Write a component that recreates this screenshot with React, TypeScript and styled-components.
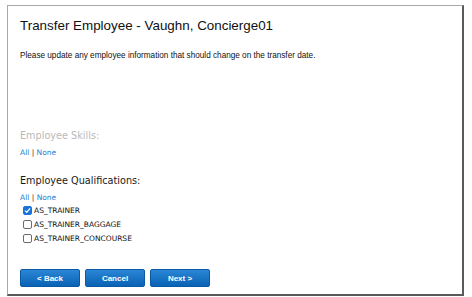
import React, { useState } from "react";
import styled, { createGlobalStyle } from "styled-components";

const GlobalStyle = createGlobalStyle`
  html, body {
    margin: 0;
    padding: 0;
    background: #ffffff;
  }
`;

const Page = styled.div`
  width: 472px;
  height: 297px;
  padding: 5px 8px 1px 7px;
  box-sizing: border-box;
`;

const Panel = styled.div`
  height: 100%;
  box-sizing: border-box;
  border: 1px solid #a8a8a8;
  border-right: 2px solid #5a5a5a;
  border-bottom: 2px solid #5a5a5a;
  padding: 11px 12px 0 12px;
  display: flex;
  flex-direction: column;
  font-family: Verdana, "DejaVu Sans", sans-serif;
`;

const Title = styled.h1`
  margin: 0;
  font-family: "Liberation Sans", Arial, sans-serif;
  font-weight: normal;
  font-size: 13.4px;
  line-height: 18px;
  color: #111;
`;

const Intro = styled.p`
  margin: 15px 0 0 0;
  font-family: "Liberation Sans", Arial, sans-serif;
  font-size: 8.2px;
  line-height: 12px;
  color: #111;
`;

const SectionTitle = styled.div<{ $muted?: boolean }>`
  font-family: "DejaVu Sans", Verdana, sans-serif;
  font-size: 9.7px;
  line-height: 14px;
  color: ${(p) => (p.$muted ? "#b9b9b9" : "#1a1a1a")};
  margin-top: ${(p) => (p.$muted ? "67px" : "16px")};
`;

const Links = styled.div`
  font-family: "DejaVu Sans", Verdana, sans-serif;
  font-size: 7.5px;
  line-height: 10px;
  color: #333;
  margin-top: 5px;
`;

const LinkText = styled.a`
  color: #1a7fd0;
  text-decoration: none;
  cursor: pointer;
`;

const CheckList = styled.div`
  display: flex;
  flex-direction: column;
  gap: 3px;
  margin-top: 2px;
  padding-left: 3px;
`;

const CheckRow = styled.label`
  display: flex;
  align-items: center;
  gap: 2px;
  height: 11px;
  font-family: "DejaVu Sans", Verdana, sans-serif;
  font-size: 7.5px;
  color: #111;
  cursor: pointer;
`;

const Box = styled.span<{ $checked: boolean }>`
  width: 9px;
  height: 9px;
  box-sizing: border-box;
  border-radius: 2px;
  border: 1px solid ${(p) => (p.$checked ? "#1a73d9" : "#6b6b6b")};
  background: ${(p) => (p.$checked ? "#1a73d9" : "#fff")};
  display: flex;
  align-items: center;
  justify-content: center;
`;

const ButtonBar = styled.div`
  display: flex;
  gap: 5px;
  margin-top: 25px;
`;

const Button = styled.button`
  width: 60px;
  height: 18px;
  padding: 0;
  border: 1px solid #0a5aa6;
  border-radius: 2px;
  background: linear-gradient(#2a86d6, #0a62b4);
  color: #fff;
  font-family: "Liberation Sans", Arial, sans-serif;
  font-weight: bold;
  font-size: 8px;
  cursor: pointer;
`;

const qualifications = ["AS_TRAINER", "AS_TRAINER_BAGGAGE", "AS_TRAINER_CONCOURSE"];

const App: React.FC = () => {
  const [checked, setChecked] = useState<Record<string, boolean>>({ AS_TRAINER: true });

  const setAll = (value: boolean) => {
    const next: Record<string, boolean> = {};
    qualifications.forEach((q) => (next[q] = value));
    setChecked(next);
  };

  return (
    <Page>
      <GlobalStyle />
      <Panel>
        <Title>Transfer Employee - Vaughn, Concierge01</Title>
        <Intro>Please update any employee information that should change on the transfer date.</Intro>

        <SectionTitle $muted>Employee Skills:</SectionTitle>
        <Links>
          <LinkText>All</LinkText> | <LinkText>None</LinkText>
        </Links>

        <SectionTitle>Employee Qualifications:</SectionTitle>
        <Links>
          <LinkText onClick={() => setAll(true)}>All</LinkText> |{" "}
          <LinkText onClick={() => setAll(false)}>None</LinkText>
        </Links>
        <CheckList>
          {qualifications.map((q) => (
            <CheckRow key={q} onClick={() => setChecked({ ...checked, [q]: !checked[q] })}>
              <Box $checked={!!checked[q]}>
                {checked[q] && (
                  <svg width="7" height="7" viewBox="0 0 10 10">
                    <path d="M1.5 5.2 L4 7.6 L8.6 2" stroke="#fff" strokeWidth="1.8" fill="none" />
                  </svg>
                )}
              </Box>
              {q}
            </CheckRow>
          ))}
        </CheckList>

        <ButtonBar>
          <Button>&lt; Back</Button>
          <Button>Cancel</Button>
          <Button>Next &gt;</Button>
        </ButtonBar>
      </Panel>
    </Page>
  );
};

export default App;
